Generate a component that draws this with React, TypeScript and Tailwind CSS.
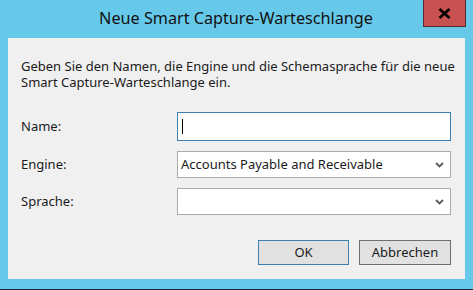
const font = { fontFamily: '"Noto Sans", "Open Sans", sans-serif' };

function Chevron() {
  return (
    <svg width="9" height="6" viewBox="0 0 9 6" className="shrink-0">
      <path d="M1 1 L4.5 4.5 L8 1" fill="none" stroke="#5a5a5a" strokeWidth="1.8" />
    </svg>
  );
}

function Row({ label, children }: { label: string; children: React.ReactNode }) {
  return (
    <div className="flex items-center">
      <span className="w-[156px] text-[13px] text-[#1b1b1b]">{label}</span>
      {children}
    </div>
  );
}

export default function App() {
  return (
    <div
      className="w-[473px] h-[290px] bg-[#67c9ea] flex flex-col border-b border-[#1f2a30]"
      style={font}
    >
      <div className="h-[38px] flex items-start pl-[49px] pr-[7px]">
        <div className="flex-1 pt-[8px] text-center text-[16.2px] leading-[20px] text-[#111]">
          Neue Smart Capture-Warteschlange
        </div>
        <button
          type="button"
          className="w-[43px] h-[27px] bg-[#c75050] border border-t-0 border-[#5a2a2a] flex items-center justify-center"
        >
          <svg width="13" height="11" viewBox="0 0 13 11">
            <path d="M1.5 1 L11.5 10 M11.5 1 L1.5 10" stroke="#000" strokeWidth="2.6" />
          </svg>
        </button>
      </div>
      <div className="mx-[8px] h-[241px] bg-[#f0f0f0] pl-[13px] pr-[14px] pt-[20px] flex flex-col">
        <p className="text-[13px] leading-[16px] text-[#1b1b1b] whitespace-nowrap">
          Geben Sie den Namen, die Engine und die Schemasprache für die neue
          <br />
          Smart Capture-Warteschlange ein.
        </p>
        <div className="mt-[22px] flex flex-col gap-[10px]">
          <Row label="Name:">
            <div className="w-[274px] h-[29px] bg-white border border-[#3c7fb1] flex items-center pl-[4px]">
              <span className="w-px h-[15px] bg-black" />
            </div>
          </Row>
          <Row label="Engine:">
            <div className="w-[274px] h-[27px] bg-white border border-[#acacac] flex items-center justify-between pl-[3px] pr-[6px]">
              <span className="text-[13px] text-[#1b1b1b]">Accounts Payable and Receivable</span>
              <Chevron />
            </div>
          </Row>
          <Row label="Sprache:">
            <div className="w-[274px] h-[27px] bg-white border border-[#acacac] flex items-center justify-end pr-[6px]">
              <Chevron />
            </div>
          </Row>
        </div>
        <div className="mt-[25px] flex justify-end gap-[10px]">
          <button
            type="button"
            className="w-[91px] h-[25px] bg-[#e1e1e1] border border-[#3c7fb1] text-[13px] text-[#1b1b1b]"
          >
            OK
          </button>
          <button
            type="button"
            className="w-[92px] h-[25px] bg-[#e1e1e1] border border-[#707070] text-[13px] text-[#1b1b1b]"
          >
            Abbrechen
          </button>
        </div>
      </div>
    </div>
  );
}
